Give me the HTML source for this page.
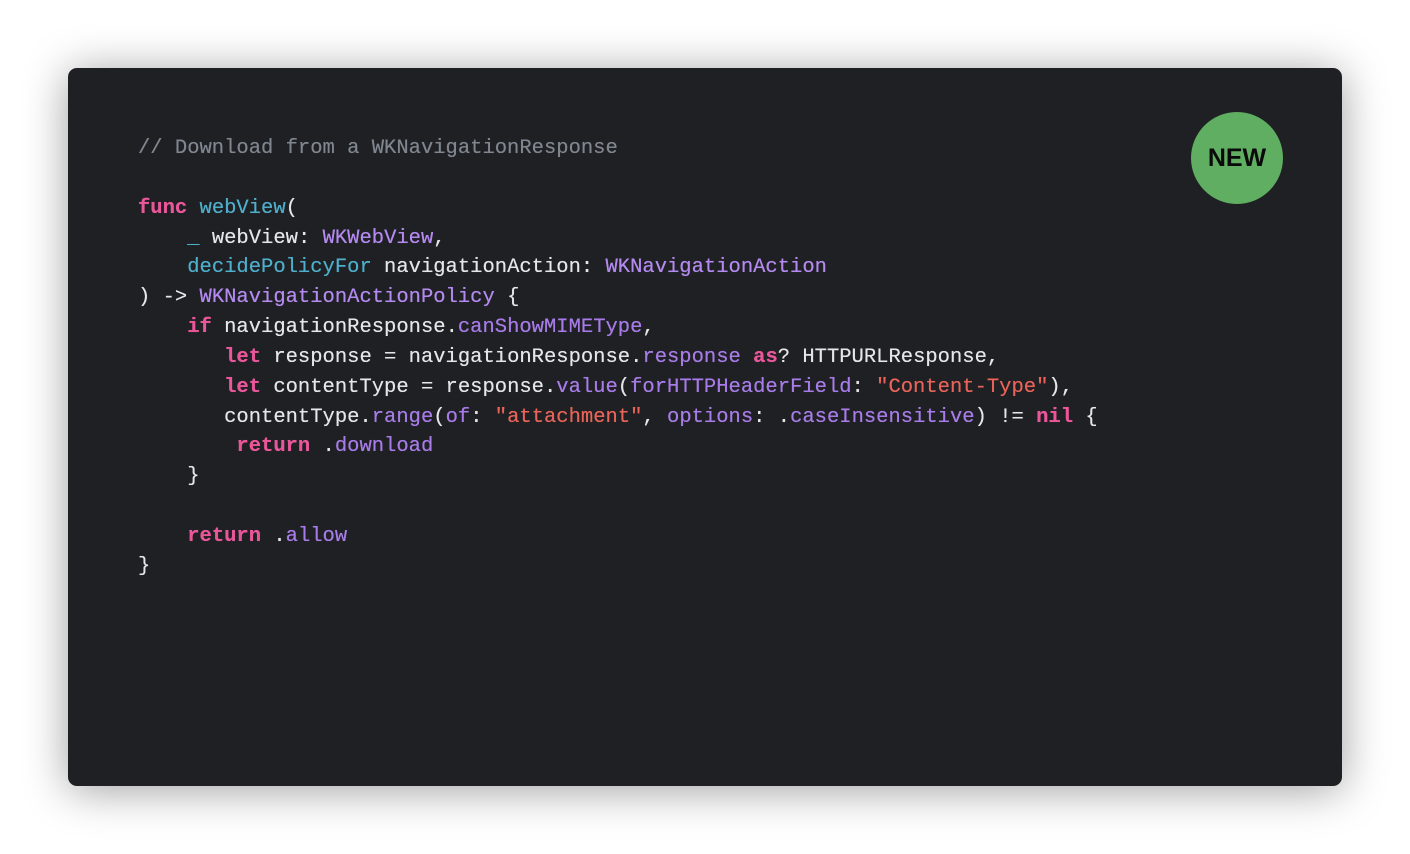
<!DOCTYPE html>
<html><head><meta charset="utf-8"><style>
html,body{margin:0;padding:0;background:#fff;width:1410px;height:854px;overflow:hidden}
.card{position:absolute;left:68px;top:68px;width:1274px;height:718px;background:#1f2023;border-radius:9px;box-shadow:0 4px 44px rgba(0,0,0,.38)}
pre{position:absolute;left:138px;top:134px;margin:0;font-family:"Liberation Mono",monospace;font-size:20.5px;line-height:29.85px;color:#e6e6e8;text-shadow:0 0 0.4px currentColor}
.k{color:#e9579a;font-weight:bold}.f{color:#4eaecb}.t{color:#b48af0}.m{color:#a77ce8}.s{color:#e8645a}.c{color:#7f868f}
.badge{position:absolute;left:1191px;top:112px;width:92px;height:92px;border-radius:50%;background:#5fae61;display:flex;align-items:center;justify-content:center;font-family:"Liberation Sans",sans-serif;font-weight:bold;font-size:25px;color:#0a0a0a}
</style></head><body>
<div class="card"></div>
<div class="badge">NEW</div>
<pre><span class="c">// Download from a WKNavigationResponse</span>

<span class="k">func</span> <span class="f">webView</span>(
    <span class="f">_</span> webView: <span class="t">WKWebView</span>,
    <span class="f">decidePolicyFor</span> navigationAction: <span class="t">WKNavigationAction</span>
) -&gt; <span class="t">WKNavigationActionPolicy</span> {
    <span class="k">if</span> navigationResponse.<span class="m">canShowMIMEType</span>,
       <span class="k">let</span> response = navigationResponse.<span class="m">response</span> <span class="k">as</span>? HTTPURLResponse,
       <span class="k">let</span> contentType = response.<span class="m">value</span>(<span class="m">forHTTPHeaderField</span>: <span class="s">"Content-Type"</span>),
       contentType.<span class="m">range</span>(<span class="m">of</span>: <span class="s">"attachment"</span>, <span class="m">options</span>: .<span class="m">caseInsensitive</span>) != <span class="k">nil</span> {
        <span class="k">return</span> .<span class="m">download</span>
    }

    <span class="k">return</span> .<span class="m">allow</span>
}</pre>
</body></html>
